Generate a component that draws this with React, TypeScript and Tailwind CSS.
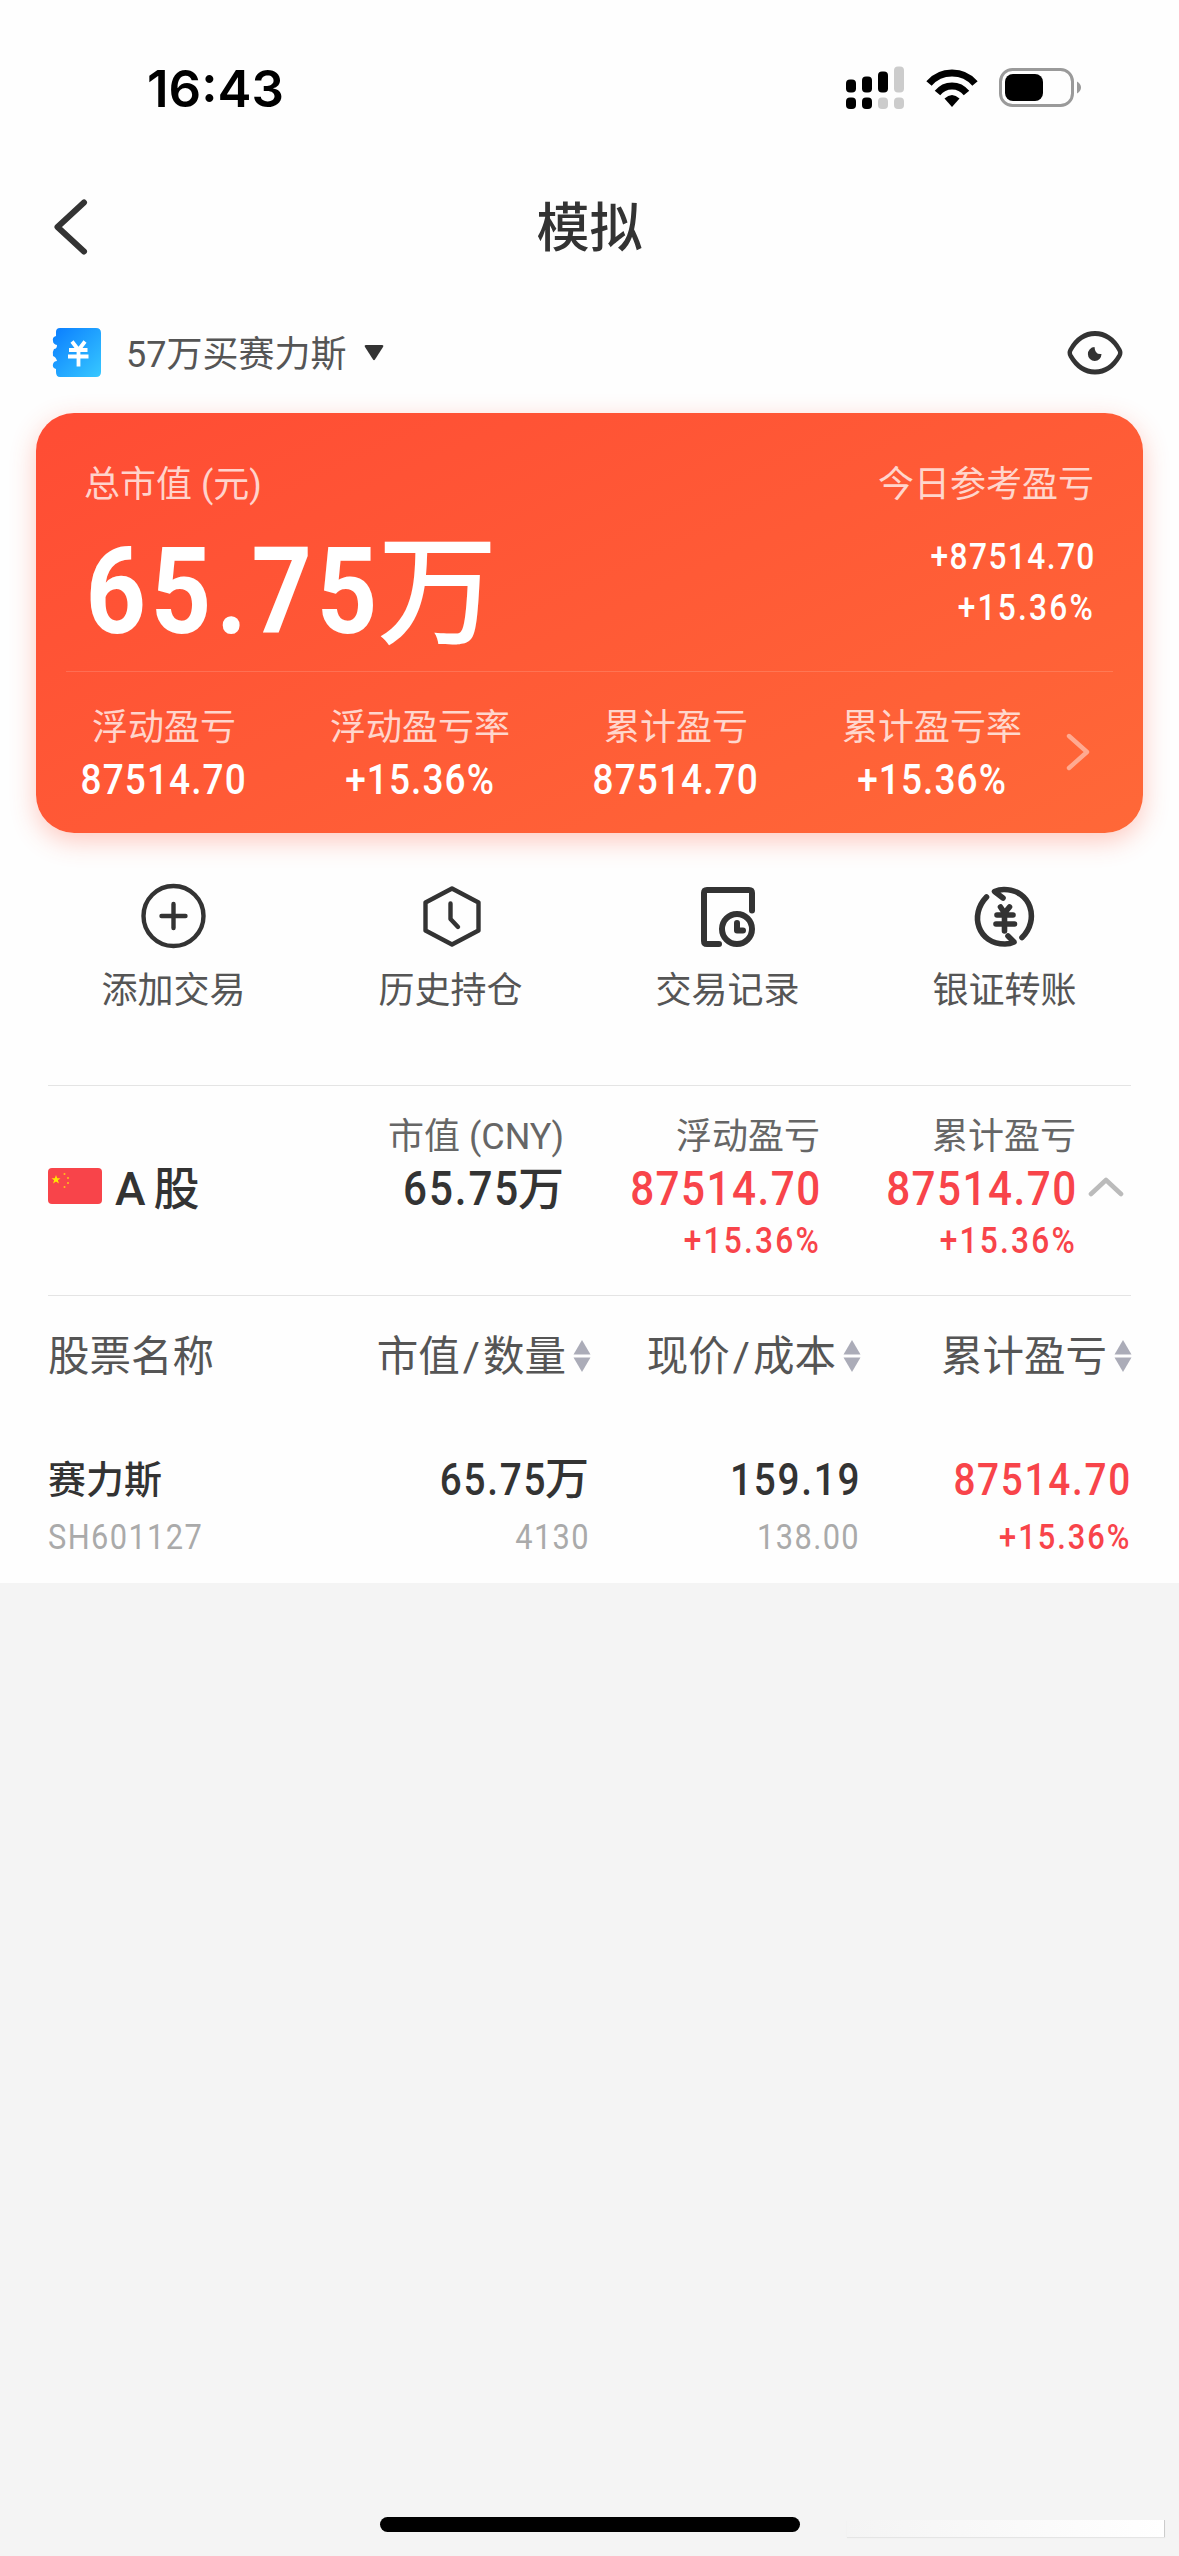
import { ReactNode } from "react"
import { twMerge } from "tailwind-merge"

const stats = [
  { label: "浮动盈亏", value: "87514.70" },
  { label: "浮动盈亏率", value: "+15.36%" },
  { label: "累计盈亏", value: "87514.70" },
  { label: "累计盈亏率", value: "+15.36%" },
]

const actions = [
  { label: "添加交易", icon: <AddIcon /> },
  { label: "历史持仓", icon: <HistoryIcon /> },
  { label: "交易记录", icon: <RecordIcon /> },
  { label: "银证转账", icon: <TransferIcon /> },
]

// narrow DIN-like digits
function Num({ children, className }: { children: ReactNode; className?: string }) {
  return (
    <span
      className={twMerge(
        "-mr-[0.04em] inline-block origin-right scale-x-88 font-medium tracking-[0.045em]",
        className
      )}
    >
      {children}
    </span>
  )
}

function AddIcon() {
  return (
    <svg width="66" height="66" viewBox="0 0 66 66" fill="none" stroke="#333" strokeWidth="4.4" strokeLinecap="round">
      <circle cx="32.500" cy="33" r="30" />
      <path d="M32.500 21v24M20.500 33h24" />
    </svg>
  )
}

function HistoryIcon() {
  return (
    <svg width="66" height="66" viewBox="0 0 66 66" fill="none" stroke="#333" strokeWidth="4.4" strokeLinecap="round" strokeLinejoin="round">
      <path d="M34 5.500L60.500 19.500V47.500L34 61.500L7.500 47.500V19.500Z" />
      <path d="M32.500 20.500V36L40 44" />
    </svg>
  )
}

function RecordIcon() {
  return (
    <svg width="66" height="66" viewBox="0 0 66 66" fill="none" stroke="#333" strokeWidth="6" strokeLinecap="round" strokeLinejoin="round">
      <path d="M57 27.500V10q0-3-3-3H12q-3 0-3 3V58q0 3 3 3H24" />
      <circle cx="42" cy="46" r="15" />
      <path d="M42 40v7.500h6" />
    </svg>
  )
}

function TransferIcon() {
  return (
    <svg width="66" height="66" viewBox="0 0 66 66" fill="none" stroke="#333" strokeWidth="5.600" strokeLinecap="round" strokeLinejoin="round">
      <path d="M14.500 14C-3 32 6 61 33 61C37 61 39 60.500 42 59L36 53" />
      <path d="M50 54.500C68 37 59 6.500 32 6.500C28 6.500 26 7 22.500 8.500L31 15" />
      <path d="M28.500 24L32.500 30L37.500 24M25 32H41M24 41H42.500M32.500 31V48" />
    </svg>
  )
}

function Sorter() {
  return (
    <svg width="18" height="32" viewBox="0 0 18 32" fill="#abacb8" className="shrink-0">
      <path d="M9 0L17.500 14.500H0.500Z" />
      <path d="M9 32L17.500 17.500H0.500Z" />
    </svg>
  )
}

function StatusBar() {
  return (
    <div className="flex h-[176px] items-center justify-between pl-[147px] pr-[96px]">
      <div className="font-['Inter',sans-serif] text-[51px] font-semibold leading-none text-black">16:43</div>
      <div className="flex items-center">
        <svg width="60" height="46" viewBox="0 -1.500 60 46">
          <rect x="0" y="13" width="10" height="13" rx="4" />
          <rect x="16" y="10" width="10" height="16" rx="4" />
          <rect x="32" y="5" width="10" height="21" rx="4" />
          <rect x="48" y="0" width="10" height="26" rx="4" fill="#ccc" />
          <rect x="0" y="31" width="10" height="11.500" rx="4" />
          <rect x="16" y="31" width="10" height="11.500" rx="4" />
          <rect x="32" y="31" width="10" height="11.500" rx="4" fill="#ccc" />
          <rect x="48" y="31" width="10" height="11.500" rx="4" fill="#ccc" />
        </svg>
        <svg width="52" height="38" viewBox="0 0 52 38" className="ml-5">
          <g fill="none" stroke="#000" strokeWidth="7">
            <path d="M3 14.500C15 0.500 37 0.500 49 14.500" />
            <path d="M11.500 24C19 14.500 33 14.500 40.500 24" />
          </g>
          <path d="M26 38L18.500 29.500Q26 22.500 33.500 29.500Z" />
        </svg>
        <svg width="84" height="40" viewBox="0 0 84 40" className="ml-[21px]">
          <rect x="1.500" y="1.500" width="72" height="36" rx="12" fill="none" stroke="#9a9a9a" strokeWidth="3" />
          <rect x="6" y="6" width="38" height="27" rx="8" />
          <path d="M78 13.500Q82 16 82 19.500T78 25.500Z" fill="#9a9a9a" />
        </svg>
      </div>
    </div>
  )
}

function AccountRow() {
  return (
    <div className="mt-12 flex h-[50px] items-center pl-[52px] pr-[56px]">
      <svg width="50" height="50" viewBox="0 0 50 50">
        <defs>
          <linearGradient id="book" x1="0" y1="0" x2="1" y2="1">
            <stop offset="0" stopColor="#0a7dff" />
            <stop offset="1" stopColor="#37c8ff" />
          </linearGradient>
        </defs>
        <path
          fill="url(#book)"
          d="M8 0H44Q49 0 49 5V44Q49 49 44 49H8Q4 49 4 44V41Q0 40 1 36Q2 33 5 33Q4 29 1 28Q0 24 2 21Q5 21 5 17Q1 16 1 13Q0 9 4 8V4Q4 0 8 0Z"
        />
        <path d="M20 13.500L26.500 22L33 13.500M17 22H35.500M16 28.500H36.500M26.500 22V38.500" fill="none" stroke="#fff" strokeWidth="3.800" />
      </svg>
      <span className="ml-[24px] pt-[3px] text-4xl leading-[50px] text-[#555]">57万买赛力斯</span>
      <svg width="20" height="16" viewBox="0 0 20 16" className="ml-[18px]" fill="#333">
        <path d="M2 0H18Q20 0 19 2L11 14.500Q10 16 9 14.500L1 2Q0 0 2 0Z" />
      </svg>
      <svg width="56" height="46" viewBox="0 0 56 46" className="ml-auto">
        <path d="M3.500 20.500C16 1 40 1 52.500 20.500Q54 23 52.500 25.500C40 45 16 45 3.500 25.500Q2 23 3.500 20.500Z" transform="translate(0 -3) scale(1 1.120)" fill="none" stroke="#333" strokeWidth="4.400" />
        <path d="M27.500 17A6.800 7 0 1 0 34.500 24Q28 25 27.500 17Z" fill="#333" />
      </svg>
    </div>
  )
}

function SummaryCard() {
  return (
    <div className="mx-[36px] mt-[35px] flex h-[420px] flex-col rounded-[38px] bg-linear-[155deg,#ff4c34,#ff6838] text-white shadow-[0_8px_26px_rgba(255,80,50,0.3)]">
      <div className="flex h-[258px] justify-between pl-[48px] pr-[49px] pt-[47px]">
        <div>
          <div className="text-4xl leading-[50px] text-white/75">总市值 (元)</div>
          <div className="mt-[10px] flex h-[144px] items-center text-[120px] leading-[144px]">
            <Num className="-ml-[39px] font-bold">65.75</Num>
            <span className="pt-1 font-medium">万</span>
          </div>
        </div>
        <div className="text-right text-4xl leading-[50px]">
          <div className="text-white/75">今日参考盈亏</div>
          <div className="mt-[22px]"><Num>+87514.70</Num></div>
          <div className="mt-px"><Num className="tracking-[0.07em]">+15.36%</Num></div>
        </div>
      </div>
      <div className="mx-[30px] h-px bg-white/15" />
      <div className="flex pt-[31px]">
        {stats.map((s) => (
          <div key={s.label} className="w-64 text-center">
            <div className="text-4xl leading-[50px] text-white/75">{s.label}</div>
            <div className="text-[43px] leading-[52px]">
              <Num className="mr-0 origin-center scale-x-86 tracking-[0.03em]">{s.value}</Num>
            </div>
          </div>
        ))}
        <svg width="24" height="40" viewBox="0 0 24 40" className="ml-[6px] mt-[29px]" fill="none" stroke="#fff" strokeOpacity="0.45" strokeWidth="4.400" strokeLinecap="round" strokeLinejoin="round">
          <path d="M3 4L21 20L3 36" />
        </svg>
      </div>
    </div>
  )
}

function MarketColumn({ label, children, change }: { label: string; children: ReactNode; change?: string }) {
  return (
    <div className="text-right leading-[52px]">
      <div className="text-4xl leading-[52px] text-[#666]">{label}</div>
      <div className="text-5xl leading-[52px]">{children}</div>
      {change && (
        <div className="text-4xl leading-[52px]"><Num className="tracking-[0.07em]">{change}</Num></div>
      )}
    </div>
  )
}

function MarketRow() {
  return (
    <div className="mx-12 flex h-[211px] border-y border-[#e4e4e4] pt-[25px]">
      <div className="flex h-[156px] w-[250px] items-center">
        <svg width="54" height="36" viewBox="0 0 54 36" className="mb-[7px]">
          <rect width="54" height="36" rx="4" fill="#f8444a" />
          <path fill="#ffe600" d="M8 7l1.200 3.200h3.300l-2.600 2 1 3.300L8 13.500l-2.900 2 1-3.300-2.600-2h3.300z" />
          <g fill="#ffc21a">
            <circle cx="16.500" cy="6" r="1" />
            <circle cx="20" cy="10" r="1" />
            <circle cx="20" cy="15" r="1" />
            <circle cx="16.500" cy="19" r="1" />
          </g>
        </svg>
        <span className="ml-[13px] flex items-center gap-2 text-[46px] font-medium leading-[52px] text-[#333]">
          <span>A</span>
          <span>股</span>
        </span>
      </div>
      <div className="w-[266px] text-[#333]">
        <MarketColumn label="市值 (CNY)">
          <Num>65.75</Num>
          <span className="text-[46px] font-medium">万</span>
        </MarketColumn>
      </div>
      <div className="w-[256px] text-[#f8444a]">
        <MarketColumn label="浮动盈亏" change="+15.36%"><Num className="tracking-[0.035em]">87514.70</Num></MarketColumn>
      </div>
      <div className="w-[256px] text-[#f8444a]">
        <MarketColumn label="累计盈亏" change="+15.36%"><Num className="tracking-[0.035em]">87514.70</Num></MarketColumn>
      </div>
      <svg width="36" height="22" viewBox="0 0 36 22" className="ml-[12px] mt-[65px]" fill="none" stroke="#bbb" strokeWidth="4.600" strokeLinecap="round" strokeLinejoin="round">
        <path d="M3 18L18 4L33 18" />
      </svg>
    </div>
  )
}

function HeadCell({ children }: { children: ReactNode }) {
  return (
    <div className="flex items-center justify-end gap-[7px]">
      <span className="flex pt-[2px]">{children}</span>
      <Sorter />
    </div>
  )
}

function Holdings() {
  return (
    <div className="mx-12">
      <div className="grid h-[120px] grid-cols-[272px_271px_270px_271px] items-center text-[41.500px] leading-[60px] text-[#555]">
        <div className="pt-[2px]">股票名称</div>
        <HeadCell>市值<span className="mx-[3px]">/</span>数量</HeadCell>
        <HeadCell>现价<span className="mx-[3px]">/</span>成本</HeadCell>
        <HeadCell>累计盈亏</HeadCell>
      </div>
      <div className="grid h-[166px] grid-cols-[272px_269px_270px_271px] pt-[38px] text-right text-[44px] leading-[52px] text-[#333]">
        <div className="text-left">
          <div className="text-[38px] font-medium">赛力斯</div>
          <div className="mt-1.5 text-[35px] text-[#aaa]"><Num className="origin-left font-normal">SH601127</Num></div>
        </div>
        <div>
          <div><Num>65.75</Num><span className="font-medium">万</span></div>
          <div className="mt-1.5 text-[35px] text-[#aaa]"><Num className="font-normal">4130</Num></div>
        </div>
        <div>
          <div><Num>159.19</Num></div>
          <div className="mt-1.5 text-[35px] text-[#aaa]"><Num className="font-normal">138.00</Num></div>
        </div>
        <div className="text-[#f8444a]">
          <div><Num>87514.70</Num></div>
          <div className="mt-1.5 text-[35px]"><Num className="tracking-[0.065em]">+15.36%</Num></div>
        </div>
      </div>
    </div>
  )
}

export default function App() {
  return (
    <div className="flex h-[2556px] w-[1179px] flex-col overflow-hidden bg-[#f4f4f4] font-['Roboto','Noto_Sans_CJK_SC',sans-serif]">
      <div className="h-[1583px] bg-[#fefefe]">
        <StatusBar />
        <div className="grid h-[104px] grid-cols-[1fr_auto_1fr] items-center px-[53px]">
          <svg width="36" height="56" viewBox="0 0 36 56" className="mb-[3px]" fill="none" stroke="#333" strokeWidth="6" strokeLinecap="round" strokeLinejoin="round">
            <path d="M31 3.500L4.500 28L31 52.500" />
          </svg>
          <h1 className="pt-[2px] text-[53px] font-medium leading-[60px] text-[#333]">模拟</h1>
        </div>
        <AccountRow />
        <SummaryCard />
        <div className="mb-[69px] ml-[35px] mt-[50px] grid w-[1108px] grid-cols-4">
          {actions.map((a) => (
            <div key={a.label} className="flex flex-col items-center">
              {a.icon}
              <span className="mt-[17px] text-4xl leading-[50px] text-[#555]">{a.label}</span>
            </div>
          ))}
        </div>
        <MarketRow />
        <Holdings />
      </div>
      <div className="flex-1" />
      <div className="flex h-[39px] items-start pl-[380px]">
        <div className="h-[15px] w-[420px] rounded-full bg-black" />
        <div className="ml-[47px] mt-[3px] h-[17px] w-[318px] border-r border-[#ccc] bg-linear-to-r from-[#f4f4f4] to-white shadow-[0_1px_1px_rgba(0,0,0,0.06)]" />
      </div>
    </div>
  )
}
